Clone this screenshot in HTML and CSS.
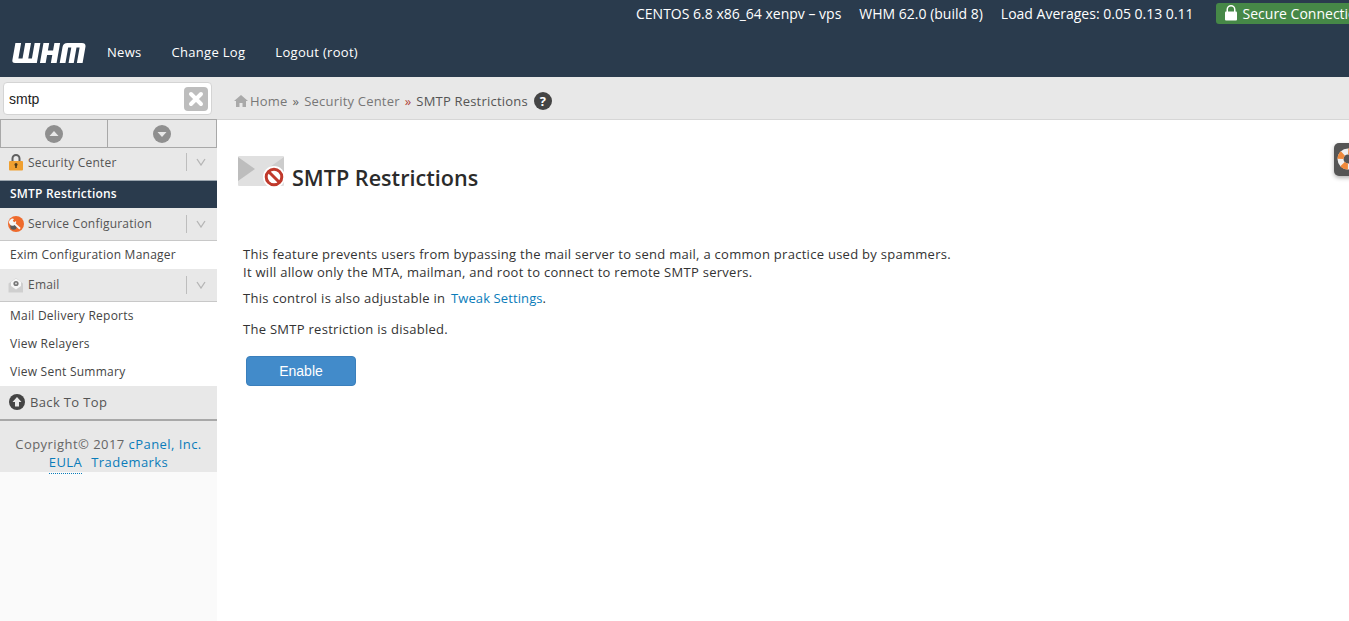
FILE: index.html
```html
<!DOCTYPE html>
<html lang="en">
<head>
    <meta charset="UTF-8">
    <meta name="viewport" content="width=device-width, initial-scale=1.0">
    <title>WHM - SMTP Restrictions</title>
    <link rel="stylesheet" href="styles.css">
</head>
<body>
    <header class="masthead">
        <div class="server-info">
            <span>CENTOS 6.8 x86_64 xenpv – vps</span>
            <span>WHM 62.0 (build 8)</span>
            <span>Load Averages: 0.05 0.13 0.11</span>
            <span class="secure">
                <svg class="secure-lock" width="12" height="16" viewBox="0 0 12 16"><path d="M1.500 7V4.500a4.500 4.500 0 0 1 9 0V7H9V4.500a3 3 0 0 0-6 0V7z" fill="#fff"/><rect x="0" y="6.500" width="12" height="9" rx="1" fill="#fff"/></svg>
                Secure Connection
            </span>
        </div>
        <nav class="main-nav">
            <svg class="logo" width="74" height="20" viewBox="0 0 74 20" role="img" aria-label="WHM">
                <g fill="#fff" transform="translate(3.400 0) skewX(-10) scale(1.040 1)">
                    <path d="M0 0h5.500v15.500h4V0h5.500v15.500h3.500V0h5.500v20H3q-3 0-3-3z"/>
                    <path d="M27 0h5.500v7.500h5V0h5.500v20h-5.500v-8h-5v8H27z"/>
                    <path d="M46 4q0-4 4-4h14q4 0 4 4v16h-5.500V4.500h-3V20h-5V4.500h-3V20H46z"/>
                </g>
            </svg>
            <a href="#">News</a>
            <a href="#">Change Log</a>
            <a href="#">Logout (root)</a>
        </nav>
    </header>

    <div class="page">
        <aside class="sidebar">
            <div class="search-row">
                <div class="search-box">
                    <span>smtp</span>
                    <span class="clear-btn">
                        <svg width="16" height="16" viewBox="0 0 16 16"><path d="M3 3l10 10M13 3L3 13" stroke="#fff" stroke-width="4" stroke-linecap="round"/></svg>
                    </span>
                </div>
            </div>
            <div class="jump-row">
                <div class="jump-cell">
                    <svg width="18" height="18" viewBox="0 0 18 18"><circle cx="9" cy="9" r="9" fill="#8f8f8f"/><path d="M4.500 11L9 6l4.500 5z" fill="#e8e8e8"/></svg>
                </div>
                <div class="jump-cell">
                    <svg width="18" height="18" viewBox="0 0 18 18"><circle cx="9" cy="9" r="9" fill="#8f8f8f"/><path d="M4.500 7L9 12l4.500-5z" fill="#e8e8e8"/></svg>
                </div>
            </div>

            <div class="menu-head menu-head-first">
                <svg class="menu-icon" width="16" height="18" viewBox="0 0 16 18"><path d="M3.500 9V5.500a4.500 4.500 0 0 1 9 0V9h-2V5.500a2.500 2.500 0 0 0-5 0V9z" fill="#5f5f5f"/><rect x="1" y="8" width="14" height="9.500" rx="1" fill="#f0a030"/><circle cx="8" cy="11.500" r="1.500" fill="#4d3a1a"/><rect x="7.200" y="12" width="1.600" height="3" fill="#4d3a1a"/></svg>
                <span class="menu-title">Security Center</span>
                <span class="menu-toggle"><svg width="10" height="8" viewBox="0 0 10 8"><path d="M1 1l4 6 4-6" fill="none" stroke="#b5b5b5" stroke-width="1.300"/></svg></span>
            </div>
            <a class="menu-item active" href="#">SMTP Restrictions</a>

            <div class="menu-head">
                <svg class="menu-icon" width="16" height="16" viewBox="0 0 16 16"><circle cx="8" cy="8" r="8" fill="#ee6a2c"/><circle cx="5.500" cy="10.500" r="3.200" fill="#5a5a5a"/><path d="M2.500 3.500a3 3 0 0 1 3.500-.5L4.800 4.800l1.400 1.400L8 5a3 3 0 0 1-.3 2.600l5 4.300-1.400 1.600-4.800-4.600a3 3 0 0 1-4-5.400z" fill="#f6f6f6"/></svg>
                <span class="menu-title">Service Configuration</span>
                <span class="menu-toggle"><svg width="10" height="8" viewBox="0 0 10 8"><path d="M1 1l4 6 4-6" fill="none" stroke="#b5b5b5" stroke-width="1.300"/></svg></span>
            </div>
            <a class="menu-item" href="#">Exim Configuration Manager</a>

            <div class="menu-head">
                <svg class="menu-icon" width="16" height="16" viewBox="0 0 16 16"><path d="M0.500 6.500L8 1l7 5.500v9h-14.500z" fill="#cfcfcf"/><path d="M3 5l5-3.500 5 3.500v4l-5 3.500-5-3.500z" fill="#f7f7f7"/><circle cx="8" cy="6.500" r="2.600" fill="#777"/><circle cx="8" cy="6.500" r="1" fill="#ddd"/></svg>
                <span class="menu-title">Email</span>
                <span class="menu-toggle"><svg width="10" height="8" viewBox="0 0 10 8"><path d="M1 1l4 6 4-6" fill="none" stroke="#b5b5b5" stroke-width="1.300"/></svg></span>
            </div>
            <a class="menu-item" href="#">Mail Delivery Reports</a>
            <a class="menu-item" href="#">View Relayers</a>
            <a class="menu-item" href="#">View Sent Summary</a>

            <a class="back-top" href="#">
                <svg width="16" height="16" viewBox="0 0 16 16"><circle cx="8" cy="8" r="8" fill="#444"/><path d="M8 3l4.500 5H10v4.500H6V8H3.500z" fill="#e8e8e8"/></svg>
                Back To Top
            </a>
            <div class="copyright">
                <div>Copyright© 2017 <a href="#">cPanel, Inc.</a></div>
                <div><a class="eula" href="#">EULA</a><a class="trademarks" href="#">Trademarks</a></div>
            </div>
        </aside>

        <div class="content-col">
            <div class="breadcrumb">
                <svg class="home-icon" width="14" height="12" viewBox="0 0 14 12"><path d="M7 0L0 6h2v6h3.500V8h3v4H12V6h2z" fill="#a9a9a9"/></svg>
                <a href="#">Home</a><span class="sep">»</span>
                <a href="#">Security Center</a><span class="sep red">»</span>
                <span class="current">SMTP Restrictions</span>
                <svg class="help-icon" width="18" height="18" viewBox="0 0 18 18"><circle cx="9" cy="9" r="9" fill="#444"/><text x="9" y="13.500" text-anchor="middle" class="help-mark">?</text></svg>
            </div>

            <main class="content">
                <div class="help-tab">
                    <svg width="22" height="22" viewBox="0 0 22 22"><circle cx="11" cy="11" r="7.500" fill="none" stroke="#f0f0f0" stroke-width="6"/><circle cx="11" cy="11" r="7.500" fill="none" stroke="#f08a3c" stroke-width="6" stroke-dasharray="6 5.800"/></svg>
                </div>
                <div class="title-row">
                    <svg class="title-icon" width="48" height="32" viewBox="0 0 48 32">
                        <rect x="0" y="0" width="46" height="30" rx="1" fill="#e0e0e0"/>
                        <path d="M0 1l17 12L0 25z" fill="#bdbdbd"/>
                        <path d="M46 1L29 13l17 12z" fill="#cccccc"/>
                        <circle cx="36" cy="21" r="11" fill="#fff"/>
                        <circle cx="36" cy="21" r="7.800" fill="none" stroke="#c0392b" stroke-width="3"/>
                        <path d="M30.500 15.500l11 11" stroke="#c0392b" stroke-width="3"/>
                    </svg>
                    <h1>SMTP Restrictions</h1>
                </div>
                <p class="lead">This feature prevents users from bypassing the mail server to send mail, a common practice used by spammers.<br>It will allow only the MTA, mailman, and root to connect to remote SMTP servers.</p>
                <p class="note">This control is also adjustable in <a class="tweak" href="#">Tweak Settings</a>.</p>
                <p class="status">The SMTP restriction is disabled.</p>
                <button class="enable-btn">Enable</button>
            </main>
        </div>
    </div>
</body>
</html>
```
FILE: styles.css
```css
html, body {
    height: 100%;
}

body {
    font-family: 'Open Sans', sans-serif;
    font-size: 13px;
    color: #333;
    margin: 0;
    padding: 0;
    background-color: #fff;
    overflow: hidden;
}

a {
    text-decoration: none;
    color: #0a7cba;
}

.masthead {
    height: 77px;
    background-color: #2a3b4d;
    color: #fff;
    overflow: hidden;
}

.server-info {
    height: 26px;
    display: flex;
    align-items: center;
    gap: 18px;
    padding-left: 636px;
    font-size: 14px;
    white-space: nowrap;
}

.secure {
    display: flex;
    flex-shrink: 0;
    align-items: center;
    gap: 6px;
    height: 21px;
    margin-left: 4px;
    padding: 0 8px 0 9px;
    border-radius: 3px;
    background-color: #468847;
}

.main-nav {
    height: 52px;
    display: flex;
    align-items: center;
    padding-left: 12px;
    letter-spacing: 0.3px;
}

.logo {
    margin: 2px 21px 0 0;
}

.main-nav a {
    color: #fff;
    margin-right: 30px;
}

.page {
    display: flex;
    height: calc(100% - 77px);
}

.sidebar {
    width: 217px;
    flex-shrink: 0;
    background-color: #fafafa;
}

.search-row {
    height: 42px;
    background-color: #e8e8e8;
    padding: 5px 0 0 3px;
    box-sizing: border-box;
}

.search-box {
    width: 209px;
    height: 33px;
    box-sizing: border-box;
    background-color: #fff;
    border: 1px solid #d4d4d4;
    border-radius: 4px;
    display: flex;
    align-items: center;
    justify-content: space-between;
    padding: 0 3px 0 5px;
    font-family: 'Liberation Sans', Arial, sans-serif;
    font-size: 14px;
    color: #222;
}

.clear-btn {
    width: 24px;
    height: 24px;
    border-radius: 4px;
    background-color: #bdbdbd;
    display: flex;
    align-items: center;
    justify-content: center;
}

.jump-row {
    display: flex;
    height: 29px;
    background-color: #e8e8e8;
    border: 1px solid #a8a8a8;
    box-sizing: border-box;
}

.jump-cell {
    flex: 1;
    display: flex;
    align-items: center;
    justify-content: center;
}

.jump-cell:first-child {
    flex: none;
    width: 106px;
}

.jump-cell + .jump-cell {
    border-left: 1px solid #a8a8a8;
}

.menu-head {
    height: 32px;
    box-sizing: border-box;
    display: flex;
    align-items: center;
    background-color: #e8e8e8;
    font-size: 12px;
    letter-spacing: 0.22px;
    padding: 0 0 1px 8px;
    color: #555;
}

.menu-head-first {
    padding-bottom: 4px;
}

.menu-icon {
    margin-right: 4px;
}

.menu-title {
    flex: 1;
}

.menu-toggle {
    width: 28px;
    height: 18px;
    padding-right: 2px;
    display: flex;
    align-items: center;
    justify-content: center;
    border-left: 1px solid #bdbdbd;
}

.menu-item {
    display: block;
    height: 28px;
    line-height: 28px;
    padding-left: 10px;
    font-size: 12px;
    letter-spacing: 0.25px;
    color: #444;
    background-color: #fff;
}

.menu-head + .menu-item {
    height: 29px;
    box-sizing: border-box;
    border-top: 1px solid #c8c8c8;
    line-height: 27px;
}

.menu-head + .menu-item.active {
    height: 28px;
    line-height: 26px;
    background-color: #2a3b4d;
    color: #fff;
    font-weight: 600;
    letter-spacing: 0.2px;
    border-top: 1px solid #9aa5ae;
}

.back-top {
    display: flex;
    align-items: center;
    gap: 5px;
    height: 35px;
    padding: 0 0 1px 9px;
    box-sizing: border-box;
    background-color: #e8e8e8;
    border-bottom: 2px solid #a8a8a8;
    color: #555;
    letter-spacing: 0.35px;
}

.copyright {
    height: 51px;
    padding-top: 14px;
    box-sizing: border-box;
    background-color: #e8e8e8;
    text-align: center;
    color: #666;
    line-height: 18px;
    letter-spacing: 0.45px;
}

.eula {
    padding-bottom: 2px;
    border-bottom: 1px dotted #0a7cba;
    margin-right: 9px;
}

.content-col {
    flex: 1;
    min-width: 0;
}

.breadcrumb {
    height: 43px;
    box-sizing: border-box;
    display: flex;
    align-items: center;
    padding: 6px 0 0 17px;
    background-color: #e8e8e8;
    border-bottom: 1px solid #d6d6d6;
    color: #666;
    letter-spacing: 0.2px;
}

.breadcrumb a {
    color: #777;
}

.home-icon {
    margin-right: 2px;
}

.sep {
    margin: 0 5px;
}

.sep.red {
    color: #b0433a;
}

.current {
    color: #555;
}

.help-icon {
    margin-left: 6px;
}

.help-mark {
    font-family: 'Open Sans', sans-serif;
    font-size: 13px;
    font-weight: 700;
    fill: #fff;
}

.content {
    position: relative;
    padding: 36px 0 0 21px;
}

.help-tab {
    position: absolute;
    top: 23px;
    right: -11px;
    width: 26px;
    height: 33px;
    padding: 5px 0 0 3px;
    box-sizing: border-box;
    background-color: #555;
    border-radius: 5px;
    box-shadow: 0 2px 4px rgba(0, 0, 0, 0.3);
}

.title-row {
    display: flex;
    align-items: center;
    gap: 6px;
    height: 32px;
}

h1 {
    margin: 10px 0 0;
    font-size: 21.600px;
    font-weight: 600;
    color: #2b2b2b;
}

p {
    margin: 0;
    color: #333;
    line-height: 18px;
    letter-spacing: 0.28px;
}

.lead {
    padding: 0 0 0 5px;
    margin-top: 57px;
}

.note {
    padding-left: 5px;
    margin-top: 8px;
}

.tweak {
    letter-spacing: 0.1px;
    margin-left: 2px;
}

.status {
    padding-left: 5px;
    margin-top: 13px;
}

.enable-btn {
    display: block;
    width: 110px;
    height: 30px;
    margin: 18px 0 0 8px;
    background-color: #428bca;
    color: #fff;
    border: 1px solid #3a7fbc;
    border-radius: 4px;
    font-family: 'Liberation Sans', Arial, sans-serif;
    font-size: 14px;
}
```
